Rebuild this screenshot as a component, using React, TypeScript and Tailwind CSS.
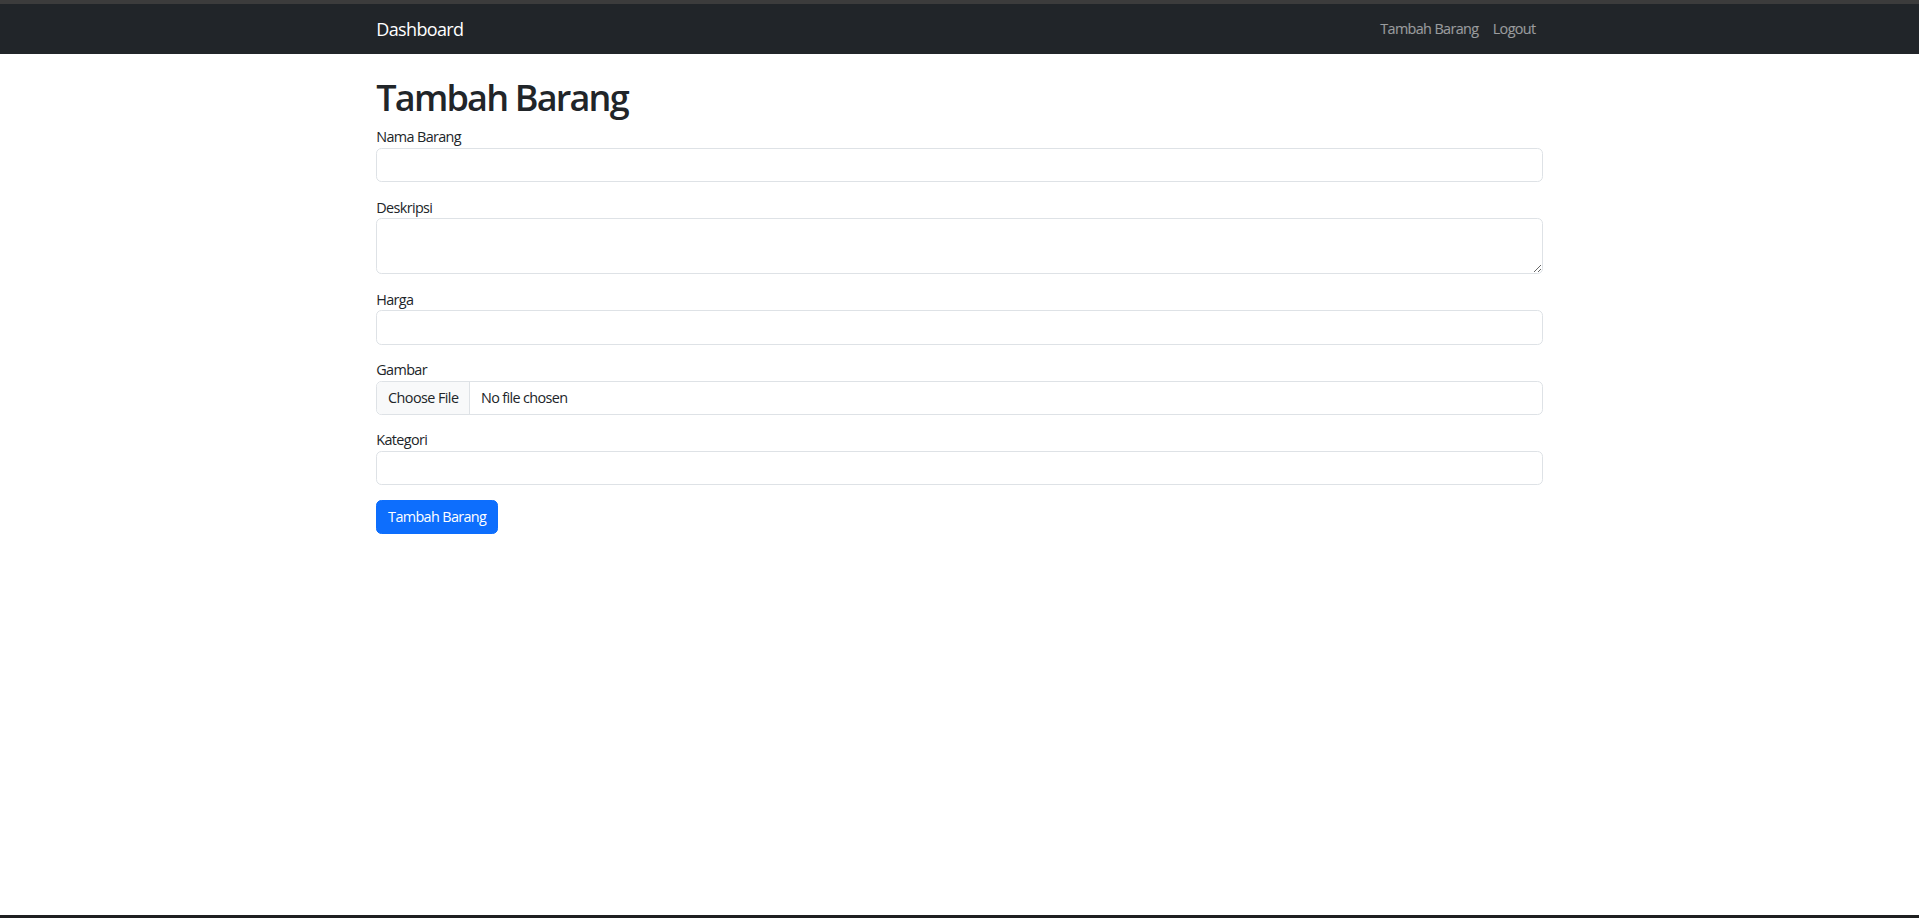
const fields = [
  { label: "Nama Barang", type: "text" },
  { label: "Deskripsi", type: "textarea" },
  { label: "Harga", type: "number" },
  { label: "Gambar", type: "file" },
  { label: "Kategori", type: "text" },
];

const inputCls =
  "block w-full rounded-[5.4px] border border-[#dee2e6] bg-white px-[10.8px] py-[5.4px] text-[14.4px] leading-[21.6px] text-[#212529] outline-none";

export default function App() {
  return (
    <div className="flex h-screen flex-col bg-white font-['Open_Sans',sans-serif] tracking-[-0.04em] text-[#212529]">
      <div className="h-[4px] bg-[#3c3c3c]"></div>

      {/* Navbar */}
      <nav className="bg-[#212529] py-[7.2px]">
        <div className="mx-auto flex max-w-[1188px] items-center justify-between px-[10.8px]">
          <a href="#" className="py-[4.5px] text-[18px] leading-[27px] text-white">
            Dashboard
          </a>
          <ul className="flex">
            <li>
              <a href="#" className="block px-[7.2px] py-[7.2px] text-[14.4px] leading-[21.6px] text-white/55">
                Tambah Barang
              </a>
            </li>
            <li>
              <a href="#" className="block px-[7.2px] py-[7.2px] text-[14.4px] leading-[21.6px] text-white/55">
                Logout
              </a>
            </li>
          </ul>
        </div>
      </nav>

      <main className="flex-1">
        <div className="mx-auto mt-[21.6px] max-w-[1188px] px-[10.8px]">
          <h1 className="mb-[7.2px] text-[36px] font-semibold leading-[43.2px] tracking-[-0.05em]">Tambah Barang</h1>
          <form onSubmit={(e) => e.preventDefault()}>
            {fields.map((f) => (
              <div key={f.label} className="mb-[14.4px]">
                <label className="block text-[14.4px] leading-[21.6px]">{f.label}</label>
                {f.type === "textarea" ? (
                  <textarea rows={2} className={inputCls}></textarea>
                ) : f.type === "file" ? (
                  <input
                    type="file"
                    className={
                      inputCls +
                      " overflow-hidden file:-my-[5.4px] file:-ml-[10.8px] file:mr-[10.8px] file:border-r file:border-[#dee2e6] file:bg-[#f8f9fa] file:px-[10.8px] file:py-[5.4px] file:text-[14.4px] file:leading-[21.6px] file:tracking-[-0.04em] file:text-[#212529]"
                    }
                  />
                ) : (
                  <input type="text" className={inputCls} />
                )}
              </div>
            ))}
            <button
              type="submit"
              className="rounded-[5.4px] border border-[#0d6efd] bg-[#0d6efd] px-[10.8px] py-[5.4px] text-[14.4px] leading-[21.6px] text-white"
            >
              Tambah Barang
            </button>
          </form>
        </div>
      </main>

      <div className="h-[3px] bg-[#1e1f20]"></div>
    </div>
  );
}
